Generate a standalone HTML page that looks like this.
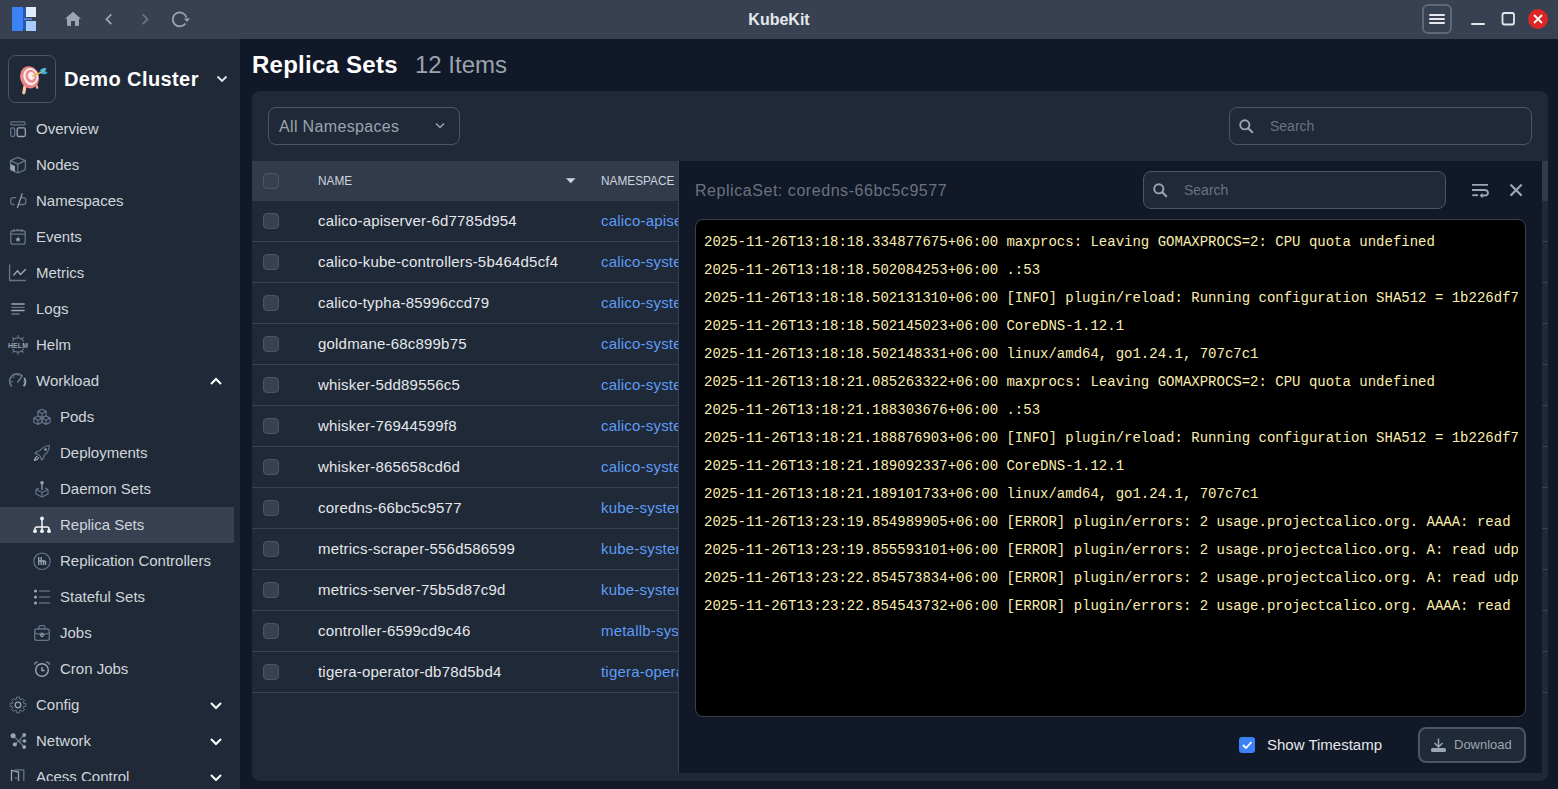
<!DOCTYPE html>
<html><head><meta charset="utf-8"><title>KubeKit</title>
<style>
*{box-sizing:border-box;margin:0;padding:0}
html,body{width:1558px;height:789px;overflow:hidden;background:#111827;font-family:"Liberation Sans",sans-serif;position:relative}
.a{position:absolute;white-space:nowrap}
#tb{left:0;top:0;width:1558px;height:39px;background:#374151}
#sb{left:0;top:39px;width:240px;height:750px;background:#1f2937}
.nav{position:absolute;left:0;top:72px;width:240px;height:670px;overflow:hidden}
.it{position:absolute;left:0;width:234px;height:36px}
.it .tx{position:absolute;left:36px;top:9px;font-size:15px;line-height:18px;color:#d1d5db;white-space:nowrap}
.it.sub .tx{left:60px}
.it.sel{background:#374151}
#card{left:252px;top:91px;width:1296px;height:690px;background:#1f2937;border-radius:8px;overflow:hidden}
.selns{position:absolute;left:16px;top:16px;width:192px;height:38px;border:1px solid #4b5563;border-radius:8px}
.selns .tx{position:absolute;left:10px;top:10px;letter-spacing:0.34px;font-size:16px;line-height:18px;color:#9ca3af}
.search{position:absolute;border:1px solid #4b5563;border-radius:8px;background:#1f2937}
.search .tx{position:absolute;font-size:14px;line-height:18px;color:#6b7280}
.thead{position:absolute;left:0;top:70px;width:1296px;height:40px;background:#313b4c}
.row{position:absolute;left:0;width:1296px;height:41px;border-bottom:1px solid #374151}
.cb{position:absolute;left:11px;width:16px;height:16px;border:1px solid #4b5563;border-radius:4px;background:#374151}
.row .cb{top:12px}
.row .nm{position:absolute;left:66px;top:11px;font-size:15px;line-height:18px;color:#e5e7eb;white-space:nowrap;letter-spacing:0.2px}
.row .ns{position:absolute;left:349px;top:11px;font-size:15px;line-height:18px;color:#5e9cf6;white-space:nowrap;letter-spacing:0.2px}
.thead .h{position:absolute;top:12px;font-size:13px;line-height:15px;color:#cfd4dc;transform:scaleX(0.91);transform-origin:0 0}
#drawer{left:678px;top:161px;width:864px;height:612px;background:#111827;border-left:1px solid #374151}
.dtitle{position:absolute;left:16px;top:21px;letter-spacing:0.55px;font-size:16px;line-height:18px;color:#6b7280;white-space:nowrap}
#log{position:absolute;left:16px;top:58px;width:831px;height:498px;background:#000;border:1px solid #374151;border-radius:8px;overflow:hidden}
#log .in{position:absolute;left:8px;top:8px;width:814px;overflow:hidden}
#log .ln{height:28px;line-height:28px;font-family:"Liberation Mono",monospace;font-size:14px;color:#fbeeb0;white-space:pre}
#ov{position:absolute;left:0;top:0;width:1558px;height:789px;pointer-events:none}
</style></head>
<body>
<div id="tb" class="a"><div class="a" style="left:0;width:1558px;top:11px;text-align:center;font-weight:bold;font-size:16px;color:#e5e7eb;line-height:18px">KubeKit</div></div>
<div id="sb" class="a">
<div class="a" style="left:64px;top:28px;font-size:20px;font-weight:bold;color:#fff;line-height:24px;letter-spacing:0.4px">Demo Cluster</div>
<div class="nav"><div class="it" style="top:0px"><div class="tx">Overview</div></div><div class="it" style="top:36px"><div class="tx">Nodes</div></div><div class="it" style="top:72px"><div class="tx">Namespaces</div></div><div class="it" style="top:108px"><div class="tx">Events</div></div><div class="it" style="top:144px"><div class="tx">Metrics</div></div><div class="it" style="top:180px"><div class="tx">Logs</div></div><div class="it" style="top:216px"><div class="tx">Helm</div></div><div class="it" style="top:252px"><div class="tx">Workload</div></div><div class="it sub" style="top:288px"><div class="tx">Pods</div></div><div class="it sub" style="top:324px"><div class="tx">Deployments</div></div><div class="it sub" style="top:360px"><div class="tx">Daemon Sets</div></div><div class="it sub sel" style="top:396px"><div class="tx">Replica Sets</div></div><div class="it sub" style="top:432px"><div class="tx">Replication Controllers</div></div><div class="it sub" style="top:468px"><div class="tx">Stateful Sets</div></div><div class="it sub" style="top:504px"><div class="tx">Jobs</div></div><div class="it sub" style="top:540px"><div class="tx">Cron Jobs</div></div><div class="it" style="top:576px"><div class="tx">Config</div></div><div class="it" style="top:612px"><div class="tx">Network</div></div><div class="it" style="top:648px"><div class="tx">Acess Control</div></div></div>
</div>
<div class="a" style="left:252px;top:51px;font-size:24px;font-weight:bold;color:#fff;line-height:28px;letter-spacing:0.25px">Replica Sets</div>
<div class="a" style="left:415px;top:51px;font-size:24px;color:#9ca3af;line-height:28px">12 Items</div>
<div id="card" class="a">
<div class="selns"><div class="tx">All Namespaces</div></div>
<div class="search" style="left:977px;top:16px;width:303px;height:38px"><div class="tx" style="left:40px;top:9px">Search</div></div>
<div class="thead"><div class="cb" style="top:12px"></div><div class="h" style="left:66px">NAME</div><div class="h" style="left:349px">NAMESPACE</div></div>
<div class="row" style="top:110px"><div class="cb"></div><div class="nm">calico-apiserver-6d7785d954</div><div class="ns">calico-apiserver</div></div><div class="row" style="top:151px"><div class="cb"></div><div class="nm">calico-kube-controllers-5b464d5cf4</div><div class="ns">calico-system</div></div><div class="row" style="top:192px"><div class="cb"></div><div class="nm">calico-typha-85996ccd79</div><div class="ns">calico-system</div></div><div class="row" style="top:233px"><div class="cb"></div><div class="nm">goldmane-68c899b75</div><div class="ns">calico-system</div></div><div class="row" style="top:274px"><div class="cb"></div><div class="nm">whisker-5dd89556c5</div><div class="ns">calico-system</div></div><div class="row" style="top:315px"><div class="cb"></div><div class="nm">whisker-76944599f8</div><div class="ns">calico-system</div></div><div class="row" style="top:356px"><div class="cb"></div><div class="nm">whisker-865658cd6d</div><div class="ns">calico-system</div></div><div class="row" style="top:397px"><div class="cb"></div><div class="nm">coredns-66bc5c9577</div><div class="ns">kube-system</div></div><div class="row" style="top:438px"><div class="cb"></div><div class="nm">metrics-scraper-556d586599</div><div class="ns">kube-system</div></div><div class="row" style="top:479px"><div class="cb"></div><div class="nm">metrics-server-75b5d87c9d</div><div class="ns">kube-system</div></div><div class="row" style="top:520px"><div class="cb"></div><div class="nm">controller-6599cd9c46</div><div class="ns">metallb-system</div></div><div class="row" style="top:561px"><div class="cb"></div><div class="nm">tigera-operator-db78d5bd4</div><div class="ns">tigera-operator</div></div>
</div>
<div id="drawer" class="a">
<div class="dtitle">ReplicaSet: coredns-66bc5c9577</div>
<div class="search" style="left:464px;top:10px;width:303px;height:38px"><div class="tx" style="left:40px;top:9px">Search</div></div>
<div id="log"><div class="in"><div class="ln">2025-11-26T13:18:18.334877675+06:00 maxprocs: Leaving GOMAXPROCS=2: CPU quota undefined</div><div class="ln">2025-11-26T13:18:18.502084253+06:00 .:53</div><div class="ln">2025-11-26T13:18:18.502131310+06:00 [INFO] plugin/reload: Running configuration SHA512 = 1b226df79860026c6a52e67daa10d7f0d57ec5b023288ec00c5e05f93523c8945</div><div class="ln">2025-11-26T13:18:18.502145023+06:00 CoreDNS-1.12.1</div><div class="ln">2025-11-26T13:18:18.502148331+06:00 linux/amd64, go1.24.1, 707c7c1</div><div class="ln">2025-11-26T13:18:21.085263322+06:00 maxprocs: Leaving GOMAXPROCS=2: CPU quota undefined</div><div class="ln">2025-11-26T13:18:21.188303676+06:00 .:53</div><div class="ln">2025-11-26T13:18:21.188876903+06:00 [INFO] plugin/reload: Running configuration SHA512 = 1b226df79860026c6a52e67daa10d7f0d57ec5b023288ec00c5e05f93523c8945</div><div class="ln">2025-11-26T13:18:21.189092337+06:00 CoreDNS-1.12.1</div><div class="ln">2025-11-26T13:18:21.189101733+06:00 linux/amd64, go1.24.1, 707c7c1</div><div class="ln">2025-11-26T13:23:19.854989905+06:00 [ERROR] plugin/errors: 2 usage.projectcalico.org. AAAA: read udp 10.244.0.5:43121-&gt;10.0.0.1:53: i/o timeout</div><div class="ln">2025-11-26T13:23:19.855593101+06:00 [ERROR] plugin/errors: 2 usage.projectcalico.org. A: read udp 10.244.0.5:43121-&gt;10.0.0.1:53: i/o timeout</div><div class="ln">2025-11-26T13:23:22.854573834+06:00 [ERROR] plugin/errors: 2 usage.projectcalico.org. A: read udp 10.244.0.5:43121-&gt;10.0.0.1:53: i/o timeout</div><div class="ln">2025-11-26T13:23:22.854543732+06:00 [ERROR] plugin/errors: 2 usage.projectcalico.org. AAAA: read udp 10.244.0.5:43121-&gt;10.0.0.1:53: i/o timeout</div></div></div>
<div class="a" style="left:588px;top:575px;font-size:15px;line-height:18px;color:#e5e7eb">Show Timestamp</div>
</div>
<svg id="ov" width="1558" height="789" viewBox="0 0 1558 789"><rect x="12" y="7" width="11" height="24" fill="#3b82f6"/><polygon points="23,9 26,7 26,31 23,29" fill="#2a55b5"/><rect x="26" y="7" width="10" height="10" fill="#e0edff"/><rect x="26" y="21" width="10" height="10" fill="#a8cbfc"/><rect x="24" y="18.3" width="8" height="1.6" fill="#5b8ef0"/><path d="M73,11.8 L81,18.8 L79,18.8 L79,24.8 Q79,26 77.8,26 L75,26 L75,21 L71,21 L71,26 L68.2,26 Q67,26 67,24.8 L67,18.8 L65,18.8 Z" fill="#9aa5b6"/><polyline points="111.3,14.3 106.5,19.2 111.3,24.1" fill="none" stroke="#9aa5b6" stroke-width="1.8"/><polyline points="142.7,14.3 147.5,19.2 142.7,24.1" fill="none" stroke="#6b7280" stroke-width="1.8"/><path d="M185.5,23.5 A7,7 0 1 1 186.5,17.5" fill="none" stroke="#9aa5b6" stroke-width="1.7"/><polygon points="184,18.5 190,18.5 187,22" fill="#9aa5b6"/><rect x="1423" y="5" width="28" height="28" rx="5" fill="none" stroke="#5d6879" stroke-width="2"/><rect x="1429" y="14" width="16" height="2" rx="1" fill="#e5e7eb"/><rect x="1429" y="18" width="16" height="2" rx="1" fill="#e5e7eb"/><rect x="1429" y="22" width="16" height="2" rx="1" fill="#e5e7eb"/><rect x="1471" y="23" width="14" height="2" rx="1" fill="#e5e7eb"/><rect x="1502.5" y="13" width="11.5" height="11.5" rx="2" fill="none" stroke="#e5e7eb" stroke-width="1.8"/><circle cx="1538" cy="19" r="10" fill="#dc2626"/><path d="M1534,15 L1542,23 M1542,15 L1534,23" stroke="#fff" stroke-width="1.8"/><rect x="8.5" y="55.5" width="47" height="47" rx="7" fill="none" stroke="#4b5563" stroke-width="1"/><path d="M25,86 L23.8,92.8" stroke="#f7c8a3" stroke-width="3.2" stroke-linecap="round"/><path d="M36.5,85.5 L37.3,87.8" stroke="#eeb48c" stroke-width="2.2" stroke-linecap="round"/><ellipse cx="29.6" cy="77.3" rx="9.4" ry="11.2" transform="rotate(-16 29.6 77.3)" fill="#ec8585"/><ellipse cx="30.7" cy="76.6" rx="7.3" ry="8.7" transform="rotate(-16 30.7 76.6)" fill="#f6eeee"/><ellipse cx="31" cy="76.3" rx="5.5" ry="6.6" transform="rotate(-16 31 76.3)" fill="#ee8c8c"/><ellipse cx="31.3" cy="76" rx="3.2" ry="3.9" transform="rotate(-16 31.3 76)" fill="#f8f1f1"/><path d="M32,76.2 L44.5,71" stroke="#e8be4c" stroke-width="1.4"/><path d="M39.5,71.5 Q41,67.5 46.2,68 Q46.8,69.8 44.5,71.2 Z" fill="#46bdea"/><path d="M40.5,73 Q44,75.5 47.5,73 Q47,71 44.5,71.2 Z" fill="#3aaee0"/><polyline points="217.5,76.5 222,81 226.5,76.5" fill="none" stroke="#e5e7eb" stroke-width="1.8"/><clipPath id="navclip"><rect x="0" y="105" width="240" height="676"/></clipPath><g clip-path="url(#navclip)"><rect x="10.7" y="121.9" width="14.6" height="3" rx="1.5" fill="none" stroke="#64748b" stroke-width="1.3"/><rect x="10.7" y="127.9" width="4" height="8.6" rx="1.5" fill="none" stroke="#64748b" stroke-width="1.3"/><rect x="17.2" y="127.9" width="8.1" height="8.6" rx="1.5" fill="none" stroke="#9aa5b6" stroke-width="1.3"/><path d="M10.5,160.7 L17.8,157.3 L25.4,160.7 L25.4,169.6 L17.8,173 L10.5,169.6 Z M10.5,160.7 L17.8,164.2 L25.4,160.7 M17.8,164.2 V173" fill="none" stroke="#64748b" stroke-width="1.3" stroke-linejoin="round"/><path d="M10.5,164 L15,166 L15,171.8 L10.5,169.6 Z" fill="#9aa5b6"/><path d="M16,193.7 H13.3 Q10.7,193.7 10.7,196.2 V198 Q10.7,200.5 13.3,200.5 H14.5 M21,193.7 H23.3 Q25.8,193.7 25.8,196.2 V198 Q25.8,200.5 23.3,200.5 H19" transform="translate(0,4)" fill="none" stroke="#64748b" stroke-width="1.3"/><path d="M22.3,193.4 L17.3,208" stroke="#9aa5b6" stroke-width="1.2"/><rect x="10.8" y="230.6" width="14.4" height="13.6" rx="2.2" fill="none" stroke="#64748b" stroke-width="1.3"/><path d="M10.8,234.2 H25.2 M14,229 V232 M22,229 V232 M16,230 H20" stroke="#64748b" stroke-width="1.3"/><polygon points="18,236.4 18.8,238.4 20.8,238.5 19.3,239.8 19.8,241.8 18,240.7 16.2,241.8 16.7,239.8 15.2,238.5 17.2,238.4" fill="#9aa5b6"/><path d="M9.6,264.5 V280.5 H26" fill="none" stroke="#64748b" stroke-width="1.4"/><path d="M13.8,275 L17.5,270.8 L20.5,274.6 L25.5,269.6" fill="none" stroke="#9aa5b6" stroke-width="1.4" stroke-linecap="round" stroke-linejoin="round"/><path d="M11.8,304 H24.2 M11.8,310.5 H24.2" stroke="#9aa5b6" stroke-width="1.3" stroke-linecap="round"/><path d="M11.8,307.3 H24.2 M11.8,314 H19" stroke="#64748b" stroke-width="1.3" stroke-linecap="round"/><text x="18" y="347.6" font-family="Liberation Sans" font-weight="bold" font-size="6.8" fill="#9aa5b6" text-anchor="middle" letter-spacing="0.2">HELM</text><path d="M12.5,341.5 A6,6 0 0 1 23.5,341.5 M12.5,348.5 A6,6 0 0 0 23.5,348.5 M18,335 V338.5 M18,351.5 V355 M12.3,337.3 L14,339 M23.7,337.3 L22,339 M12.3,352.7 L14,351 M23.7,352.7 L22,351" fill="none" stroke="#64748b" stroke-width="1.1"/><path d="M11.7,386.3 A7.1,7.1 0 0 1 22.5,376.1" fill="none" stroke="#64748b" stroke-width="1.8"/><path d="M24.2,377.9 A7.1,7.1 0 0 1 23.6,386.2" fill="none" stroke="#9aa5b6" stroke-width="1.8"/><path d="M11,381.6 H12.7 M13,376.6 L14.2,377.8 M18,374.6 V376.1 M25,381.6 H23.3" stroke="#64748b" stroke-width="1.3"/><path d="M17.9,382 L22,376" stroke="#64748b" stroke-width="1.6" stroke-linecap="round"/><path d="M42,409.3 L46.2,411.4 L46.2,415.6 L42,417.7 L37.8,415.6 L37.8,411.4 Z M37.8,411.4 L42,413.5 L46.2,411.4 M42,413.5 V417.7" fill="none" stroke="#64748b" stroke-width="1.2" stroke-linejoin="round"/><path d="M38,416.0 L42.2,418.09999999999997 L42.2,422.3 L38,424.4 L33.8,422.3 L33.8,418.09999999999997 Z M33.8,418.09999999999997 L38,420.2 L42.2,418.09999999999997 M38,420.2 V424.4" fill="none" stroke="#64748b" stroke-width="1.2" stroke-linejoin="round"/><path d="M46,416.0 L50.2,418.09999999999997 L50.2,422.3 L46,424.4 L41.8,422.3 L41.8,418.09999999999997 Z M41.8,418.09999999999997 L46,420.2 L50.2,418.09999999999997 M46,420.2 V424.4" fill="none" stroke="#64748b" stroke-width="1.2" stroke-linejoin="round"/><path d="M49.5,445.5 Q43,446 39.5,451 L37,451.3 L35,453.5 L38.2,454.3 L40.7,456.8 L41.5,460 L43.7,458 L44,455.5 Q49,452 49.5,445.5 Z" fill="none" stroke="#64748b" stroke-width="1.2" stroke-linejoin="round"/><circle cx="45.5" cy="449.5" r="1.2" fill="#9aa5b6"/><path d="M37.5,456 Q35,457 34.5,460.3 Q37.8,459.8 38.8,457.3" fill="none" stroke="#9aa5b6" stroke-width="1.2"/><circle cx="42" cy="482.8" r="1.8" fill="#9aa5b6"/><path d="M42,484 V490" stroke="#9aa5b6" stroke-width="1.2"/><path d="M36,489.5 L42,492.5 L48,489.5 M42,492.5 V497 M39,488 L36,489.5 V494 L42,497 L48,494 V489.5 L45,488" fill="none" stroke="#64748b" stroke-width="1.2" stroke-linejoin="round"/><path d="M42,519 V531 M35,531 V529 Q35,527 37,527 H47 Q49,527 49,529 V531" fill="none" stroke="#f3f4f6" stroke-width="1.5"/><circle cx="42" cy="518.5" r="1.9" fill="#f3f4f6"/><circle cx="35" cy="531.2" r="1.9" fill="#f3f4f6"/><circle cx="42" cy="531.2" r="1.9" fill="#f3f4f6"/><circle cx="49" cy="531.2" r="1.9" fill="#f3f4f6"/><circle cx="42" cy="561.3" r="8.2" fill="none" stroke="#64748b" stroke-width="1.2"/><path d="M38.7,557 V565 M41.2,557 V565 M38.7,561 H45.3 M43.5,561 V565 M45.5,561 V565" stroke="#9aa5b6" stroke-width="1.3"/><circle cx="35.5" cy="591" r="1.6" fill="#9aa5b6"/><path d="M39,591 H50" stroke="#64748b" stroke-width="1.3"/><circle cx="35.5" cy="597" r="1.6" fill="#9aa5b6"/><path d="M39,597 H50" stroke="#64748b" stroke-width="1.3"/><circle cx="35.5" cy="603" r="1.6" fill="#9aa5b6"/><path d="M39,603 H50" stroke="#64748b" stroke-width="1.3"/><rect x="34.7" y="629" width="14.6" height="11.3" rx="2" fill="none" stroke="#64748b" stroke-width="1.3"/><path d="M39,629 V627.2 Q39,625.7 40.5,625.7 H43.5 Q45,625.7 45,627.2 V629 M34.7,633 Q42,636 49.3,633" fill="none" stroke="#64748b" stroke-width="1.3"/><rect x="40.8" y="633" width="2.4" height="3.6" rx="1.2" fill="none" stroke="#9aa5b6" stroke-width="1.1"/><circle cx="42" cy="670" r="6.3" fill="none" stroke="#9aa5b6" stroke-width="1.4"/><path d="M42,667 V670.5 H44.5" fill="none" stroke="#9aa5b6" stroke-width="1.4"/><path d="M34.2,664.6 Q35.2,662.3 37.8,661.9 M49.8,664.6 Q48.8,662.3 46.2,661.9" fill="none" stroke="#64748b" stroke-width="1.9"/><polygon points="25.83,703.34 25.83,706.66 23.86,706.30 23.06,708.22 24.71,709.36 22.36,711.71 21.22,710.06 19.30,710.86 19.66,712.83 16.34,712.83 16.70,710.86 14.78,710.06 13.64,711.71 11.29,709.36 12.94,708.22 12.14,706.30 10.17,706.66 10.17,703.34 12.14,703.70 12.94,701.78 11.29,700.64 13.64,698.29 14.78,699.94 16.70,699.14 16.34,697.17 19.66,697.17 19.30,699.14 21.22,699.94 22.36,698.29 24.71,700.64 23.06,701.78 23.86,703.70" fill="none" stroke="#64748b" stroke-width="1.0" stroke-linejoin="round"/><circle cx="18" cy="705" r="2.8" fill="none" stroke="#9aa5b6" stroke-width="1.3"/><path d="M13.1,735.8 L18.5,741 L24.2,735 M18.5,741 L24.5,741 M18.5,741 L24.2,747 M18.5,741 L14.8,744.5" fill="none" stroke="#64748b" stroke-width="1.2"/><circle cx="13.1" cy="735.8" r="2.5" fill="#9aa5b6"/><circle cx="24.2" cy="735" r="1.9" fill="#9aa5b6"/><circle cx="24.5" cy="741" r="1.8" fill="#9aa5b6"/><circle cx="24.2" cy="747" r="1.9" fill="#9aa5b6"/><circle cx="14.8" cy="744.5" r="2.1" fill="#9aa5b6"/><path d="M11.5,781.5 V770.3 L18.5,772 V781.5" fill="none" stroke="#9aa5b6" stroke-width="1.3"/><path d="M14.5,769.8 H23.8 V781.5" fill="none" stroke="#64748b" stroke-width="1.3"/><circle cx="16" cy="778" r="0.8" fill="#9aa5b6"/><polyline points="211,384 216,379 221,384" fill="none" stroke="#fff" stroke-width="2"/><polyline points="211,703 216,708 221,703" fill="none" stroke="#fff" stroke-width="2"/><polyline points="211,739 216,744 221,739" fill="none" stroke="#fff" stroke-width="2"/><polyline points="211,775 216,780 221,775" fill="none" stroke="#fff" stroke-width="2"/></g><polyline points="436,123.5 440,127.5 444,123.5" fill="none" stroke="#9aa5b6" stroke-width="1.5"/><circle cx="1244.8" cy="124.8" r="4.6" fill="none" stroke="#9aa5b6" stroke-width="1.9"/><path d="M1248.2,128.2 L1252.3,132.3" stroke="#9aa5b6" stroke-width="2" stroke-linecap="round"/><circle cx="1158.8" cy="188.8" r="4.6" fill="none" stroke="#9aa5b6" stroke-width="1.9"/><path d="M1162.2,192.20000000000002 L1166.3,196.3" stroke="#9aa5b6" stroke-width="2" stroke-linecap="round"/><polygon points="566,178.3 575.5,178.3 570.75,183.2" fill="#d1d5db"/><path d="M1472,184.8 H1488 M1472,190 H1484.5 Q1488,190 1488,193 Q1488,195.5 1484.5,195.5 H1481" fill="none" stroke="#9aa5b6" stroke-width="1.8"/><path d="M1472.3,195.2 H1478" stroke="#9aa5b6" stroke-width="1.9"/><polygon points="1482.5,192.8 1479.5,195.5 1482.5,198.2" fill="#9aa5b6"/><path d="M1511.2,185.2 L1521,195 M1521,185.2 L1511.2,195" stroke="#9aa5b6" stroke-width="2.3" stroke-linecap="round"/><rect x="1239" y="737" width="16" height="16" rx="3" fill="#3b82f6"/><polyline points="1243,745 1246,748 1251.5,742" fill="none" stroke="#fff" stroke-width="1.8"/><rect x="1419" y="728" width="106" height="34" rx="7" fill="#1f2937" stroke="#4b5563" stroke-width="2"/><path d="M1438.5,738.5 V746.5 M1434.5,743 L1438.5,747 L1442.5,743" fill="none" stroke="#9aa5b6" stroke-width="1.5"/><rect x="1431" y="748" width="15" height="4" rx="1.5" fill="#9aa5b6"/></svg>
<div class="a" style="left:1454px;top:737px;font-size:13px;line-height:16px;color:#9ca3af">Download</div>
</body></html>
